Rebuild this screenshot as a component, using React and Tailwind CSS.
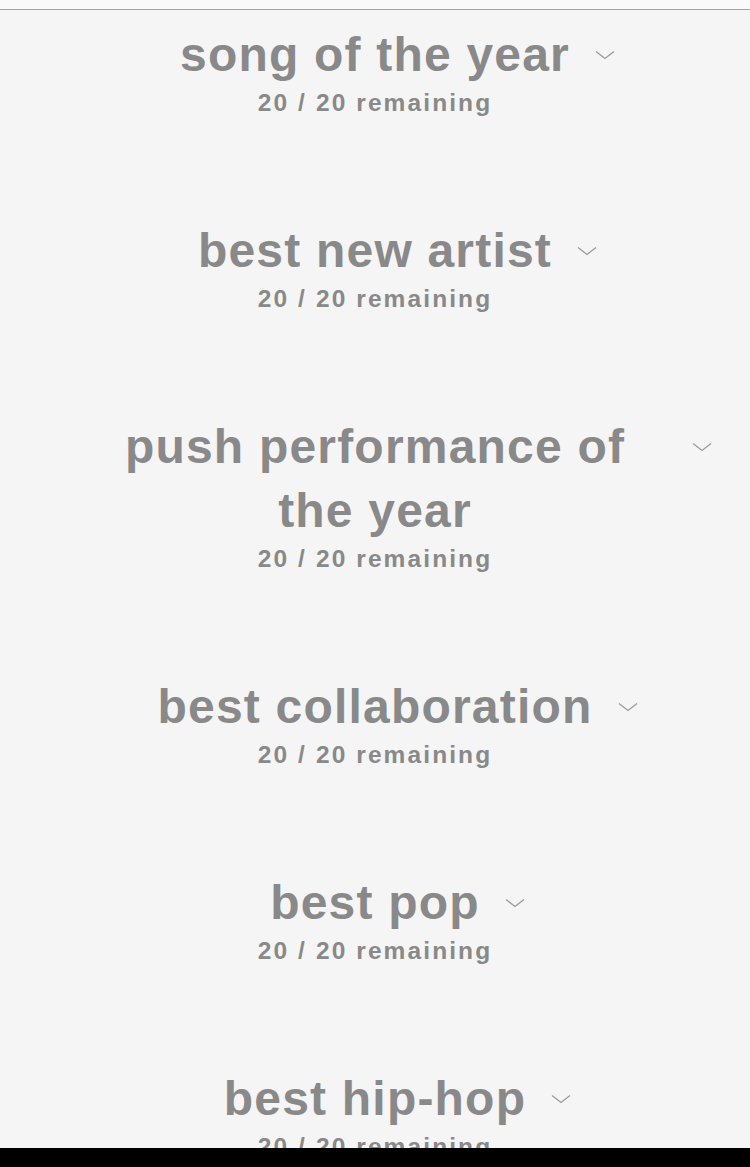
import React from "react";

const categories = [
  "song of the year",
  "best new artist",
  "push performance of the year",
  "best collaboration",
  "best pop",
  "best hip-hop",
];

function Chevron({ className }) {
  return (
    <svg
      viewBox="0 0 20 10"
      width="20"
      height="10"
      fill="none"
      stroke="#9a9a9a"
      strokeWidth="1.3"
      className={className}
    >
      <path d="M1 1.5 L10 8.5 L19 1.5" />
    </svg>
  );
}

function Category({ title }) {
  return (
    <section className="flex flex-col items-center">
      <div className="relative max-w-[584px] text-center">
        <h2 className="text-[48px] leading-[64px] font-bold tracking-[1.2px] text-[#898989]">
          {title}
        </h2>
        <Chevron className="absolute left-full top-[27px] ml-[25px]" />
      </div>
      <p className="text-[24.5px] leading-[32px] font-bold tracking-[2.1px] text-[#898989]">
        20 / 20 remaining
      </p>
    </section>
  );
}

export default function App() {
  return (
    <div
      className="min-h-[1167px] bg-[#f5f5f5] overflow-hidden"
      style={{ fontFamily: '"Liberation Sans", Arial, sans-serif' }}
    >
      <div className="h-[9px] bg-[#fafafa] border-b border-[#a3a3a3] box-content" />
      <main className="flex flex-col gap-[100px] pt-[13px]">
        {categories.map((c) => (
          <Category key={c} title={c} />
        ))}
      </main>
      <div className="fixed bottom-0 left-0 right-0 h-[19px] bg-black" />
    </div>
  );
}
